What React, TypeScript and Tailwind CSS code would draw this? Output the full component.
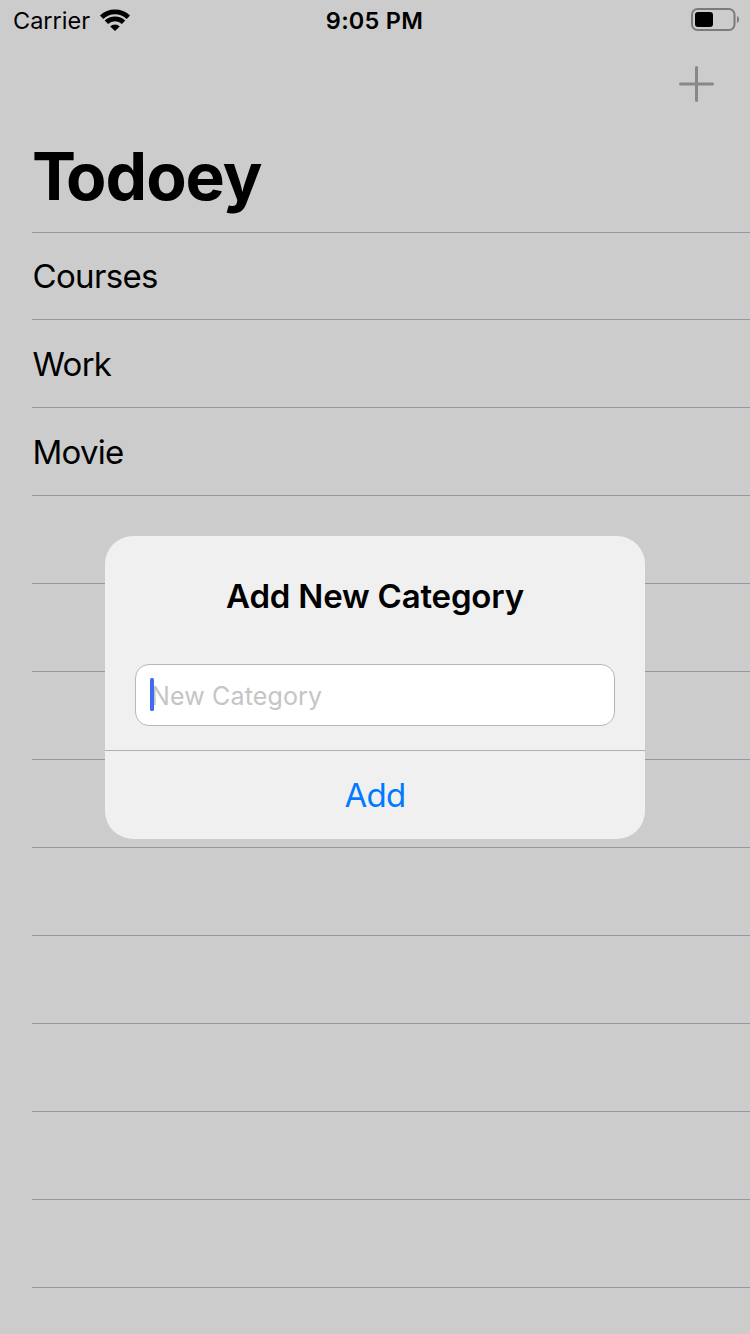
const font = "font-['Inter',sans-serif]";
const rows = ["Courses", "Work", "Movie", "", "", "", "", "", "", "", "", "", ""];

function StatusBar() {
  return (
    <div className="grid h-10 shrink-0 grid-cols-3 pl-[13px] pr-[11px]">
      <div className="flex items-start">
        <span className="w-[87px] pt-px text-[23.5px] leading-10">Carrier</span>
        <svg className="mt-[9px]" width="30" height="22" viewBox="0 0 30 22" fill="none" stroke="#000" strokeWidth="4.8">
          <path d="M1.6 8.2a19.4 19.4 0 0 1 26.8 0" />
          <path d="M6.4 13.3a12.3 12.3 0 0 1 17.2 0" />
          <path d="M15 22l-4.8-4.6a6.8 6.8 0 0 1 9.6 0z" fill="#000" stroke="none" />
        </svg>
      </div>
      <span className="-ml-[3px] pt-px text-center text-[23.5px] font-semibold leading-10 tracking-[0.25px]">9:05 PM</span>
      <svg className="mt-2 justify-self-end" width="48" height="23" viewBox="0 0 48 23">
        <rect x="1" y="1" width="42.5" height="21" rx="5.5" fill="none" stroke="#7b7b7b" strokeWidth="2" />
        <rect x="4" y="4" width="18" height="15" rx="3" fill="#000" />
        <path d="M46 8c2.7 1 2.7 6 0 7z" fill="#7b7b7b" />
      </svg>
    </div>
  );
}

function AddCategoryAlert() {
  return (
    <div className="absolute left-[105px] top-[536px] flex h-[303px] w-[540px] flex-col rounded-[28px] bg-[#f0f0f0]">
      <h2 className="mt-[40px] text-center text-[33px] font-semibold leading-[40px] tracking-[-0.2px]">Add New Category</h2>
      <div className="mx-[30px] mt-[48px] flex h-[62px] items-center rounded-[14px] border border-[#b7b7b7] bg-white pl-[14px]">
        <div className="relative z-10 -mt-px h-[33px] w-1 rounded-[1.5px] bg-[#426bf2]" />
        <span className="-ml-[3px] pt-[3px] text-[25px] tracking-[0.15px] text-[#c5c5c7]">New Category</span>
      </div>
      <button className="mt-[24px] flex-1 border-t border-[#b0b0b0] pt-[2px] text-[33px] tracking-[-0.7px] text-[#007aff]">Add</button>
    </div>
  );
}

export default function App() {
  return (
    <main className={`relative flex h-[1334px] w-[750px] flex-col overflow-hidden bg-[#cccccc] text-black ${font}`}>
      <StatusBar />
      <div className="flex h-[88px] shrink-0 items-start justify-end pr-[36px] pt-[26px]">
        <svg width="35" height="36" viewBox="0 0 35 36" stroke="#888888" strokeWidth="3" strokeLinecap="round">
          <path d="M17.5 1.5v33M1.5 18h32" />
        </svg>
      </div>
      <h1 className="h-[104px] shrink-0 pl-[32px] text-[66px] font-bold leading-[97px] tracking-[-1px]"><span className="tracking-[-10px]">T</span>odoey</h1>
      <ul className="ml-[32px] shrink-0">
        {rows.map((row, i) => (
          <li key={i} className="flex h-[88px] items-center border-t border-[#98989a] pl-[0.5px] pt-[3px] text-[33px] tracking-[-0.75px] first:h-[87px] first:pt-px first:tracking-[-0.65px]">{row}</li>
        ))}
      </ul>
      <AddCategoryAlert />
    </main>
  );
}
